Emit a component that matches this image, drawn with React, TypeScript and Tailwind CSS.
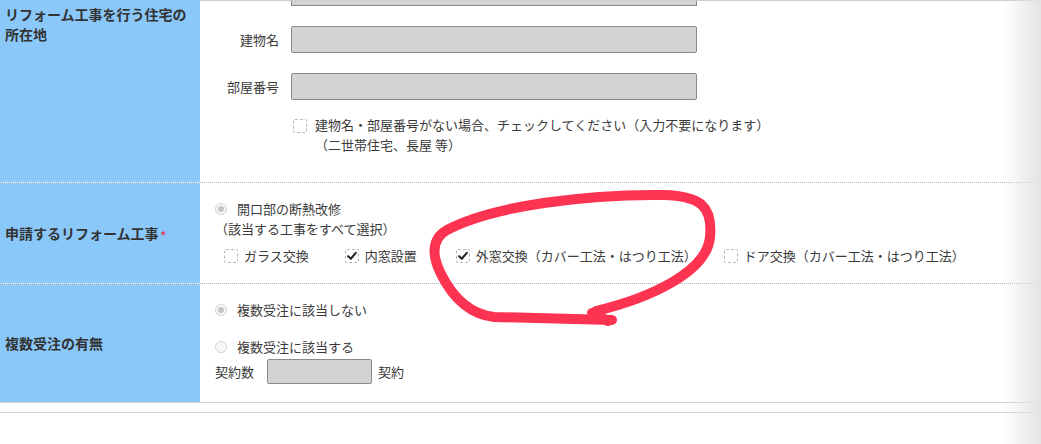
import React from "react";

const Checkbox = ({ checked = false }: { checked?: boolean }) => (
  <span className="inline-flex h-[14px] w-[14px] shrink-0 items-center justify-center rounded-[2px] border border-dashed border-[#b8b8b8] bg-white">
    {checked && (
      <svg viewBox="0 0 14 14" className="h-[12px] w-[12px]">
        <path d="M2.5 7.2 L5.6 10.2 L11.4 3.4" fill="none" stroke="#2a2a2a" strokeWidth="2.5" strokeLinecap="round" strokeLinejoin="round" />
      </svg>
    )}
  </span>
);

const Radio = ({ checked = false }: { checked?: boolean }) => (
  <span className="inline-flex h-[12px] w-[12px] shrink-0 items-center justify-center rounded-full border border-[#d4d4d4] bg-[#f6f6f6]">
    {checked && <span className="h-[6px] w-[6px] rounded-full bg-[#c4c4c4]" />}
  </span>
);

const CheckItem = ({ label, checked, className }: { label: string; checked?: boolean; className?: string }) => (
  <span className={`inline-flex items-center ${className ?? ""}`}>
    <Checkbox checked={checked} />
    <span className="ml-[6px]">{label}</span>
  </span>
);

export default function App() {
  return (
    <div className="relative h-[444px] w-[1041px] overflow-hidden bg-white font-['Noto_Sans_CJK_JP',sans-serif] text-[13px] leading-[20px] text-[#3a3a3a]">
      {/* 所在地 */}
      <div className="flex h-[183px] border-b border-dotted border-[#b5b5b5]">
        <div className="w-[200px] shrink-0 bg-[#8ac8fa] pl-[5px] pt-[4px] text-[14px] font-bold text-[#333]">
          リフォーム工事を行う住宅の
          <br />
          所在地
        </div>
        <div className="flex-1 border-t border-[#cfcfcf]">
          <div className="ml-[91px] h-[5px] w-[406px] border-x border-b border-[#8a8a8a] bg-[#d3d3d3]" />
          <div className="mt-[20px] flex items-center">
            <span className="w-[79px] text-right">建物名</span>
            <div className="ml-[12px] h-[27px] w-[406px] rounded-[2px] border border-[#8a8a8a] bg-[#d3d3d3]" />
          </div>
          <div className="mt-[20px] flex items-center">
            <span className="w-[79px] text-right">部屋番号</span>
            <div className="ml-[12px] h-[27px] w-[406px] rounded-[2px] border border-[#8a8a8a] bg-[#d3d3d3]" />
          </div>
          <div className="ml-[93px] mt-[15px] flex items-start">
            <span className="mt-[3px]">
              <Checkbox />
            </span>
            <div className="ml-[8px]">
              建物名・部屋番号がない場合、チェックしてください（入力不要になります）
              <br />
              （二世帯住宅、長屋 等）
            </div>
          </div>
        </div>
      </div>

      {/* 申請するリフォーム工事 */}
      <div className="flex h-[101px] border-b border-dotted border-[#b5b5b5]">
        <div className="flex w-[200px] shrink-0 items-center bg-[#8ac8fa] pl-[5px] text-[14px] font-bold text-[#333]">
          申請するリフォーム工事<span className="ml-[2px] mt-[3px] text-[11px] text-[#e8364a]">*</span>
        </div>
        <div className="flex-1 pl-[15px] pt-[16px]">
          <div className="flex items-center">
            <Radio checked />
            <span className="ml-[10px]">開口部の断熱改修</span>
          </div>
          <div>（該当する工事をすべて選択）</div>
          <div className="mt-[7px] flex items-center pl-[9px]">
            <CheckItem label="ガラス交換" className="mr-[36px]" />
            <CheckItem label="内窓設置" checked className="mr-[39px]" />
            <CheckItem label="外窓交換（カバー工法・はつり工法）" checked className="mr-[27px]" />
            <CheckItem label="ドア交換（カバー工法・はつり工法）" />
          </div>
        </div>
      </div>

      {/* 複数受注の有無 */}
      <div className="flex h-[119px] border-b border-[#d2d2d2]">
        <div className="flex w-[200px] shrink-0 items-center bg-[#8ac8fa] pl-[5px] text-[14px] font-bold text-[#333]">
          複数受注の有無
        </div>
        <div className="flex-1 pl-[15px] pt-[16px]">
          <div className="flex items-center">
            <Radio checked />
            <span className="ml-[10px]">複数受注に該当しない</span>
          </div>
          <div className="mt-[17px] flex items-center">
            <Radio />
            <span className="ml-[10px]">複数受注に該当する</span>
          </div>
          <div className="mt-[2px] flex h-[25px] items-center">
            <span className="w-[52px]">契約数</span>
            <div className="h-[25px] w-[105px] rounded-[2px] border border-[#8a8a8a] bg-[#d3d3d3]" />
            <span className="ml-[6px]">契約</span>
          </div>
        </div>
      </div>
      <div className="mt-[9px] h-px bg-[#d2d2d2]" />

      {/* right edge shade */}
      <div className="pointer-events-none absolute right-0 top-0 h-full w-[38px] bg-linear-to-r from-white/0 to-[#e4e4e4]" />

      {/* hand-drawn red circle */}
      <svg className="pointer-events-none absolute left-0 top-0" width="1041" height="444" viewBox="0 0 1041 444">
        <path
          d="M 596 311 C 650 298, 707 272, 710 237 C 713 206, 700 196, 664 195 C 590 194, 494 205, 447 230 C 431 239, 432 256, 441 274 C 452 296, 468 314, 494 317 L 612 320"
          fill="none"
          stroke="#fd3352"
          strokeWidth="10"
          strokeLinecap="round"
          strokeLinejoin="round"
        />
        <path d="M 592 313 L 608 321" fill="none" stroke="#fd3352" strokeWidth="10" strokeLinecap="round" />
      </svg>
    </div>
  );
}
